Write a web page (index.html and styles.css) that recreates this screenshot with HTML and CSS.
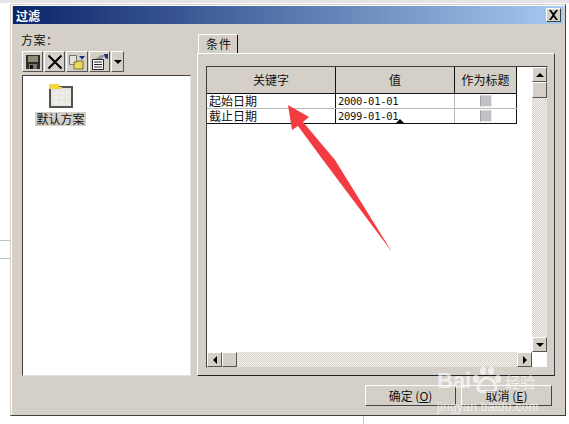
FILE: index.html
```html
<!doctype html>
<html lang="zh">
<head>
  <meta charset="UTF-8">
  <title>过滤</title>
  <link rel="stylesheet" href="styles.css">
</head>
<body>
  <div class="desk">
    <span class="desk-top"></span>
    <span class="desk-line line-a"></span>
    <span class="desk-line line-b"></span>
    <span class="desk-tick"></span>

    <div class="dialog">
      <div class="titlebar">
        <span class="title">过滤</span>
        <span class="close">
          <svg width="11" height="10" viewBox="0 0 11 10"><path d="M1 0h2l2.500 3L8 0h2L6.500 5 10 10H8L5.500 7 3 10H1l3.500-5z" fill="#000"/></svg>
        </span>
      </div>

      <div class="main">
        <div class="left">
          <div class="plan-label">方案：</div>
          <div class="toolbar">
            <span class="tool">
              <svg width="16" height="16" viewBox="0 0 16 16"><path d="M1 1h14v14H1z" fill="#2e2e28"/><path d="M3 2h10v6H3z" fill="#8c8c72"/><path d="M4 10h8v5H4z" fill="#77776a"/><path d="M5 11h3v4H5z" fill="#111"/></svg>
            </span>
            <span class="tool">
              <svg width="16" height="16" viewBox="0 0 16 16"><path d="M1.500 1.500l13 13M14.500 1.500l-13 13" stroke="#000" stroke-width="2" fill="none"/></svg>
            </span>
            <span class="tool tool-wide">
              <svg width="18" height="16" viewBox="0 0 18 16"><path d="M1.500 1.500h7v9h-7z" fill="#e4e3da" stroke="#77776e"/><path d="M6 8h3l1-1h5v8H6z" fill="#eed858" stroke="#77703a"/><path d="M11 2h6l-3 3.500z" fill="#102a80"/></svg>
            </span>
            <span class="tool">
              <svg width="18" height="16" viewBox="0 0 18 16"><path d="M1.500 5.500h11v10h-11z" fill="#fff" stroke="#222"/><path d="M3 8h8M3 10.500h8M3 13h8" stroke="#222"/><path d="M4 5l6-4h4l-3 4z" fill="#98989c"/><path d="M13 0h4v5l-3-1z" fill="#1c2f80"/></svg>
            </span>
            <span class="tool tool-drop"><i class="tri-down"></i></span>
          </div>
          <div class="plan-list">
            <div class="plan-item">
              <svg class="folder" width="24" height="25" viewBox="0 0 24 25"><path d="M1 4h22v20H1z" fill="#e6e4e0" stroke="#55534e" stroke-width="2"/><path d="M0 1h10v3h3v2H0z" fill="#f5d63c"/><path d="M4 8h17v14H4z" fill="#efede8"/><path d="M4 12h17M4 17h17M10 8v14M16 8v14" stroke="#e2e0da"/></svg>
              <span class="plan-name">默认方案</span>
            </div>
          </div>
        </div>

        <div class="right">
          <div class="tab">条件</div>
          <div class="panel">
            <div class="grid">
              <div class="grid-top">
                <div class="table">
                  <div class="row row-head">
                    <div class="cell col-key">关键字</div>
                    <div class="cell col-val">值</div>
                    <div class="cell col-chk">作为标题</div>
                  </div>
                  <div class="row">
                    <div class="cell col-key">起始日期</div>
                    <div class="cell col-val date">2000-01-01</div>
                    <div class="cell col-chk"><i class="check"></i></div>
                  </div>
                  <div class="row row-last">
                    <div class="cell col-key">截止日期</div>
                    <div class="cell col-val date">2099-01-01<i class="tri-up marker"></i></div>
                    <div class="cell col-chk"><i class="check"></i></div>
                  </div>
                </div>
                <div class="vscroll">
                  <span class="sbtn"><i class="tri-up"></i></span>
                  <span class="sbtn thumb-v"></span>
                  <span class="track"></span>
                  <span class="sbtn"><i class="tri-down"></i></span>
                </div>
              </div>
              <div class="hscroll">
                <span class="sbtn"><i class="tri-left"></i></span>
                <span class="sbtn"></span>
                <span class="track"></span>
                <span class="sbtn"><i class="tri-right"></i></span>
                <span class="corner"></span>
              </div>
            </div>
          </div>
        </div>
      </div>

      <div class="footer">
        <span class="btn">确定 (<u>O</u>)</span>
        <span class="btn">取消 (<u>E</u>)</span>
      </div>
    </div>

    <svg class="arrow" width="569" height="424" viewBox="0 0 569 424">
      <path d="M288 105L309 117 303 122 335 160 392 252 323 160 298 126 292 130z" fill="#f23c42"/>
    </svg>

    <div class="mark">
      <div class="mark-top">
        <span class="mark-bai">Bai</span>
        <svg width="30" height="28" viewBox="0 0 30 28"><g fill="#fff"><ellipse cx="4" cy="13" rx="3" ry="4"/><ellipse cx="11" cy="5" rx="3" ry="4"/><ellipse cx="19" cy="5" rx="3" ry="4"/><ellipse cx="26" cy="13" rx="3" ry="4"/></g><path d="M15 12c-5 0-9 6-9 10 0 4 5 4 9 3 4 1 9 1 9-3 0-4-4-10-9-10z" fill="none" stroke="#fff" stroke-width="3"/></svg>
        <span class="mark-jy">经验</span>
      </div>
      <div class="mark-url">jingyan.baidu.com</div>
    </div>
  </div>
</body>
</html>
```

FILE: styles.css
```css
* { margin: 0; padding: 0; box-sizing: border-box; }
body { background: #fff; font-family: "Noto Sans CJK SC", "Liberation Sans", sans-serif; font-size: 12px; color: #111; }
i { display: block; }

.desk { position: relative; width: 569px; height: 424px; padding: 4px 0 0 10px; overflow: hidden; background: #fff; }
.desk-top { position: absolute; left: 0; top: 0; width: 569px; height: 3px; background: #e4e4e4; }
.desk-line { position: absolute; left: 0; width: 10px; height: 1px; background: #b4c4cc; }
.line-a { top: 240px; }
.line-b { top: 258px; }
.desk-tick { position: absolute; left: 363px; top: 416px; width: 1px; height: 8px; background: #c8c8c8; }

.dialog { width: 556px; height: 412px; padding: 1px 2px; background: #d4d0c8; border: 1px solid; border-color: #d4d0c8 #404040 #404040 #d4d0c8; box-shadow: inset 1px 1px 0 #fff; }

.titlebar { height: 18px; display: flex; align-items: center; justify-content: space-between; padding: 0 2px 0 3px; background: linear-gradient(to right, #0a246a, #a6caf0); }
.title { color: #fff; font-size: 12px; font-weight: bold; }
.close { width: 15px; height: 14px; display: flex; align-items: center; justify-content: center; background: #d4d0c8; border: 1px solid; border-color: #fff #404040 #404040 #fff; }

.main { display: flex; gap: 6px; padding: 10px 0 0 9px; }
.left { width: 169px; }
.plan-label { height: 17px; line-height: 11px; margin-left: -1px; letter-spacing: 0.5px; }

.toolbar { display: flex; gap: 1px; height: 21px; }
.tool { width: 21px; display: flex; align-items: center; justify-content: center; background: #d4d0c8; border: 1px solid; border-color: #fff #555 #555 #fff; }
.tool-wide { width: 22px; }
.tool-drop { width: 13px; }

.plan-list { height: 301px; margin-top: 3px; background: #fff; border: 1px solid; border-color: #404040 #e4e2dc #e4e2dc #404040; }
.plan-item { width: 51px; margin: 7px 0 0 12px; display: flex; flex-direction: column; align-items: center; }
.folder { display: block; }
.plan-name { margin-top: 4px; padding: 0 1px; background: #d4d0c8; line-height: 14px; white-space: nowrap; }

.right { width: 358px; }
.tab { width: 40px; height: 19px; margin-left: 1px; padding-left: 7px; line-height: 17px; letter-spacing: 1px; border: 1px solid; border-color: #fff #111 #d4d0c8 #fff; border-bottom: 0; border-radius: 2px 2px 0 0; }
.panel { height: 323px; padding: 12px 0 0 8px; border: 1px solid; border-color: #fff #404040 #222 #fff; }
.grid { width: 342px; height: 302px; background: #fff; border: 1px solid; border-color: #404040 #d4d0c8 #d4d0c8 #404040; }
.grid-top { display: flex; height: 285px; }
.table { width: 325px; }

.row { display: flex; height: 15px; border-bottom: 1px solid #b8b8b4; width: 310px; }
.row-head { height: 27px; background: #d4d0c8; border-bottom: 1px solid #111; }
.row-last { border-bottom: 1px solid #111; }
.cell { display: flex; align-items: center; padding-left: 2px; line-height: 14px; border-right: 1px solid #b8b8b4; white-space: nowrap; }
.col-key { width: 129px; border-right-color: #111; }
.col-val { width: 119px; position: relative; }
.col-chk { width: 62px; justify-content: center; padding: 0; border-right-color: #111; }
.row-head .cell { justify-content: center; padding: 0; border-right-color: #111; }
.date { font-family: "DejaVu Sans Mono", "Liberation Mono", monospace; font-size: 10.500px; letter-spacing: -.3px; }
.check { width: 12px; height: 12px; background: #c2c0c4; border: 1px solid; border-color: #d8d6d8 #ecebe8 #ecebe8 #a0a0a0; }

.vscroll { width: 15px; display: flex; flex-direction: column; }
.hscroll { display: flex; height: 15px; }
.sbtn { flex: none; width: 15px; height: 15px; display: flex; align-items: center; justify-content: center; background: #d4d0c8; border: 1px solid; border-color: #fff #555 #555 #fff; }
.thumb-v { height: 16px; }
.track { flex: 1; background: repeating-conic-gradient(#d4d0c8 0 25%, #f4f3f0 0 50%) 0 0 / 2px 2px; }
.corner { width: 15px; background: #fff; }

.tri-up { width: 0; height: 0; border: 4px solid transparent; border-top: 0; border-bottom: 4px solid #000; }
.tri-down { width: 0; height: 0; border: 4px solid transparent; border-bottom: 0; border-top: 4px solid #000; }
.tri-left { width: 0; height: 0; border: 4px solid transparent; border-left: 0; border-right: 4px solid #000; }
.tri-right { width: 0; height: 0; border: 4px solid transparent; border-right: 0; border-left: 4px solid #000; }
.marker { position: absolute; left: 60px; bottom: 0; }

.footer { display: flex; justify-content: flex-end; gap: 5px; margin-top: 9px; padding-right: 11px; }
.btn { width: 91px; height: 21px; display: flex; align-items: center; justify-content: center; line-height: 14px; background: #d4d0c8; border: 1px solid; border-color: #fff #444 #444 #fff; }

.arrow { position: absolute; left: 0; top: 0; }

.mark { position: absolute; left: 437px; top: 365px; width: 110px; color: #fff; opacity: .65; }
.mark-top { display: flex; align-items: flex-end; gap: 1px; height: 29px; }
.mark-bai { font-family: "Liberation Sans", sans-serif; font-weight: bold; font-size: 22px; line-height: 26px; }
.mark-jy { margin-left: 2px; font-size: 15px; line-height: 24px; }
.mark-url { font-family: "Liberation Sans", sans-serif; font-size: 12px; line-height: 14px; margin-top: 6px; letter-spacing: .3px; white-space: nowrap; }
```
